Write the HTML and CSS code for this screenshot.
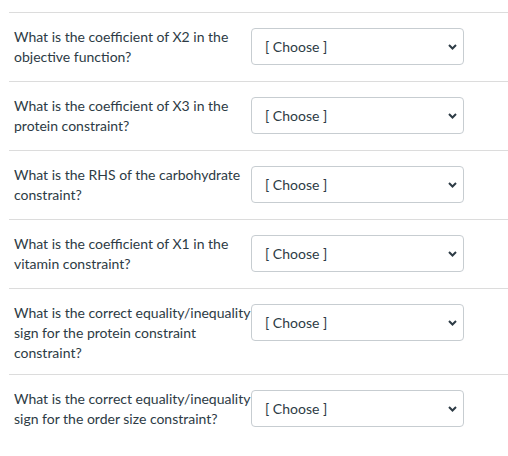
FILE: index.html
```html
<!DOCTYPE html>
<html>
<head>
<meta charset="utf-8">
<link rel="stylesheet" href="styles.css">
</head>
<body>
<div class="list">
  <div class="row">
    <div class="label">What is the coefficient of X2 in the objective function?</div>
    <div class="select"><span class="value">[ Choose ]</span><svg class="chev" width="9" height="6" viewBox="0 0 9 6"><path d="M1 1 L4.5 4.5 L8 1" fill="none" stroke="#2d3b45" stroke-width="2"/></svg></div>
  </div>
  <div class="row">
    <div class="label">What is the coefficient of X3 in the protein constraint?</div>
    <div class="select"><span class="value">[ Choose ]</span><svg class="chev" width="9" height="6" viewBox="0 0 9 6"><path d="M1 1 L4.5 4.5 L8 1" fill="none" stroke="#2d3b45" stroke-width="2"/></svg></div>
  </div>
  <div class="row">
    <div class="label">What is the RHS of the carbohydrate constraint?</div>
    <div class="select"><span class="value">[ Choose ]</span><svg class="chev" width="9" height="6" viewBox="0 0 9 6"><path d="M1 1 L4.5 4.5 L8 1" fill="none" stroke="#2d3b45" stroke-width="2"/></svg></div>
  </div>
  <div class="row">
    <div class="label">What is the coefficient of X1 in the vitamin constraint?</div>
    <div class="select"><span class="value">[ Choose ]</span><svg class="chev" width="9" height="6" viewBox="0 0 9 6"><path d="M1 1 L4.5 4.5 L8 1" fill="none" stroke="#2d3b45" stroke-width="2"/></svg></div>
  </div>
  <div class="row">
    <div class="label">What is the correct equality/inequality sign for the protein constraint constraint?</div>
    <div class="select"><span class="value">[ Choose ]</span><svg class="chev" width="9" height="6" viewBox="0 0 9 6"><path d="M1 1 L4.5 4.5 L8 1" fill="none" stroke="#2d3b45" stroke-width="2"/></svg></div>
  </div>
  <div class="row">
    <div class="label">What is the correct equality/inequality sign for the order size constraint?</div>
    <div class="select"><span class="value">[ Choose ]</span><svg class="chev" width="9" height="6" viewBox="0 0 9 6"><path d="M1 1 L4.5 4.5 L8 1" fill="none" stroke="#2d3b45" stroke-width="2"/></svg></div>
  </div>
</div>
</body>
</html>
```
FILE: styles.css
```css
html, body {
  margin: 0;
  padding: 0;
  background: #ffffff;
}
body {
  font-family: Lato, "Liberation Sans", sans-serif;
  font-size: 14px;
  color: #2d3b45;
}
.list {
  padding: 12px 0 0 9px;
}
.row {
  display: flex;
  align-items: flex-start;
  border-top: 1px solid #dcdcdc;
  padding: 14px 0 11px 5px;
}
.label {
  width: 237px;
  flex: none;
  line-height: 20px;
}
.select {
  flex: none;
  box-sizing: border-box;
  width: 213px;
  height: 37px;
  margin-top: 1px;
  margin-bottom: 5px;
  border: 1px solid #c7cdd1;
  border-radius: 4px;
  display: flex;
  align-items: center;
  justify-content: space-between;
  padding: 0 6px 0 13px;
  background: #fff;
}
.value {
  font-size: 14px;
  color: #2d3b45;
}
.chev {
  display: block;
}
```
